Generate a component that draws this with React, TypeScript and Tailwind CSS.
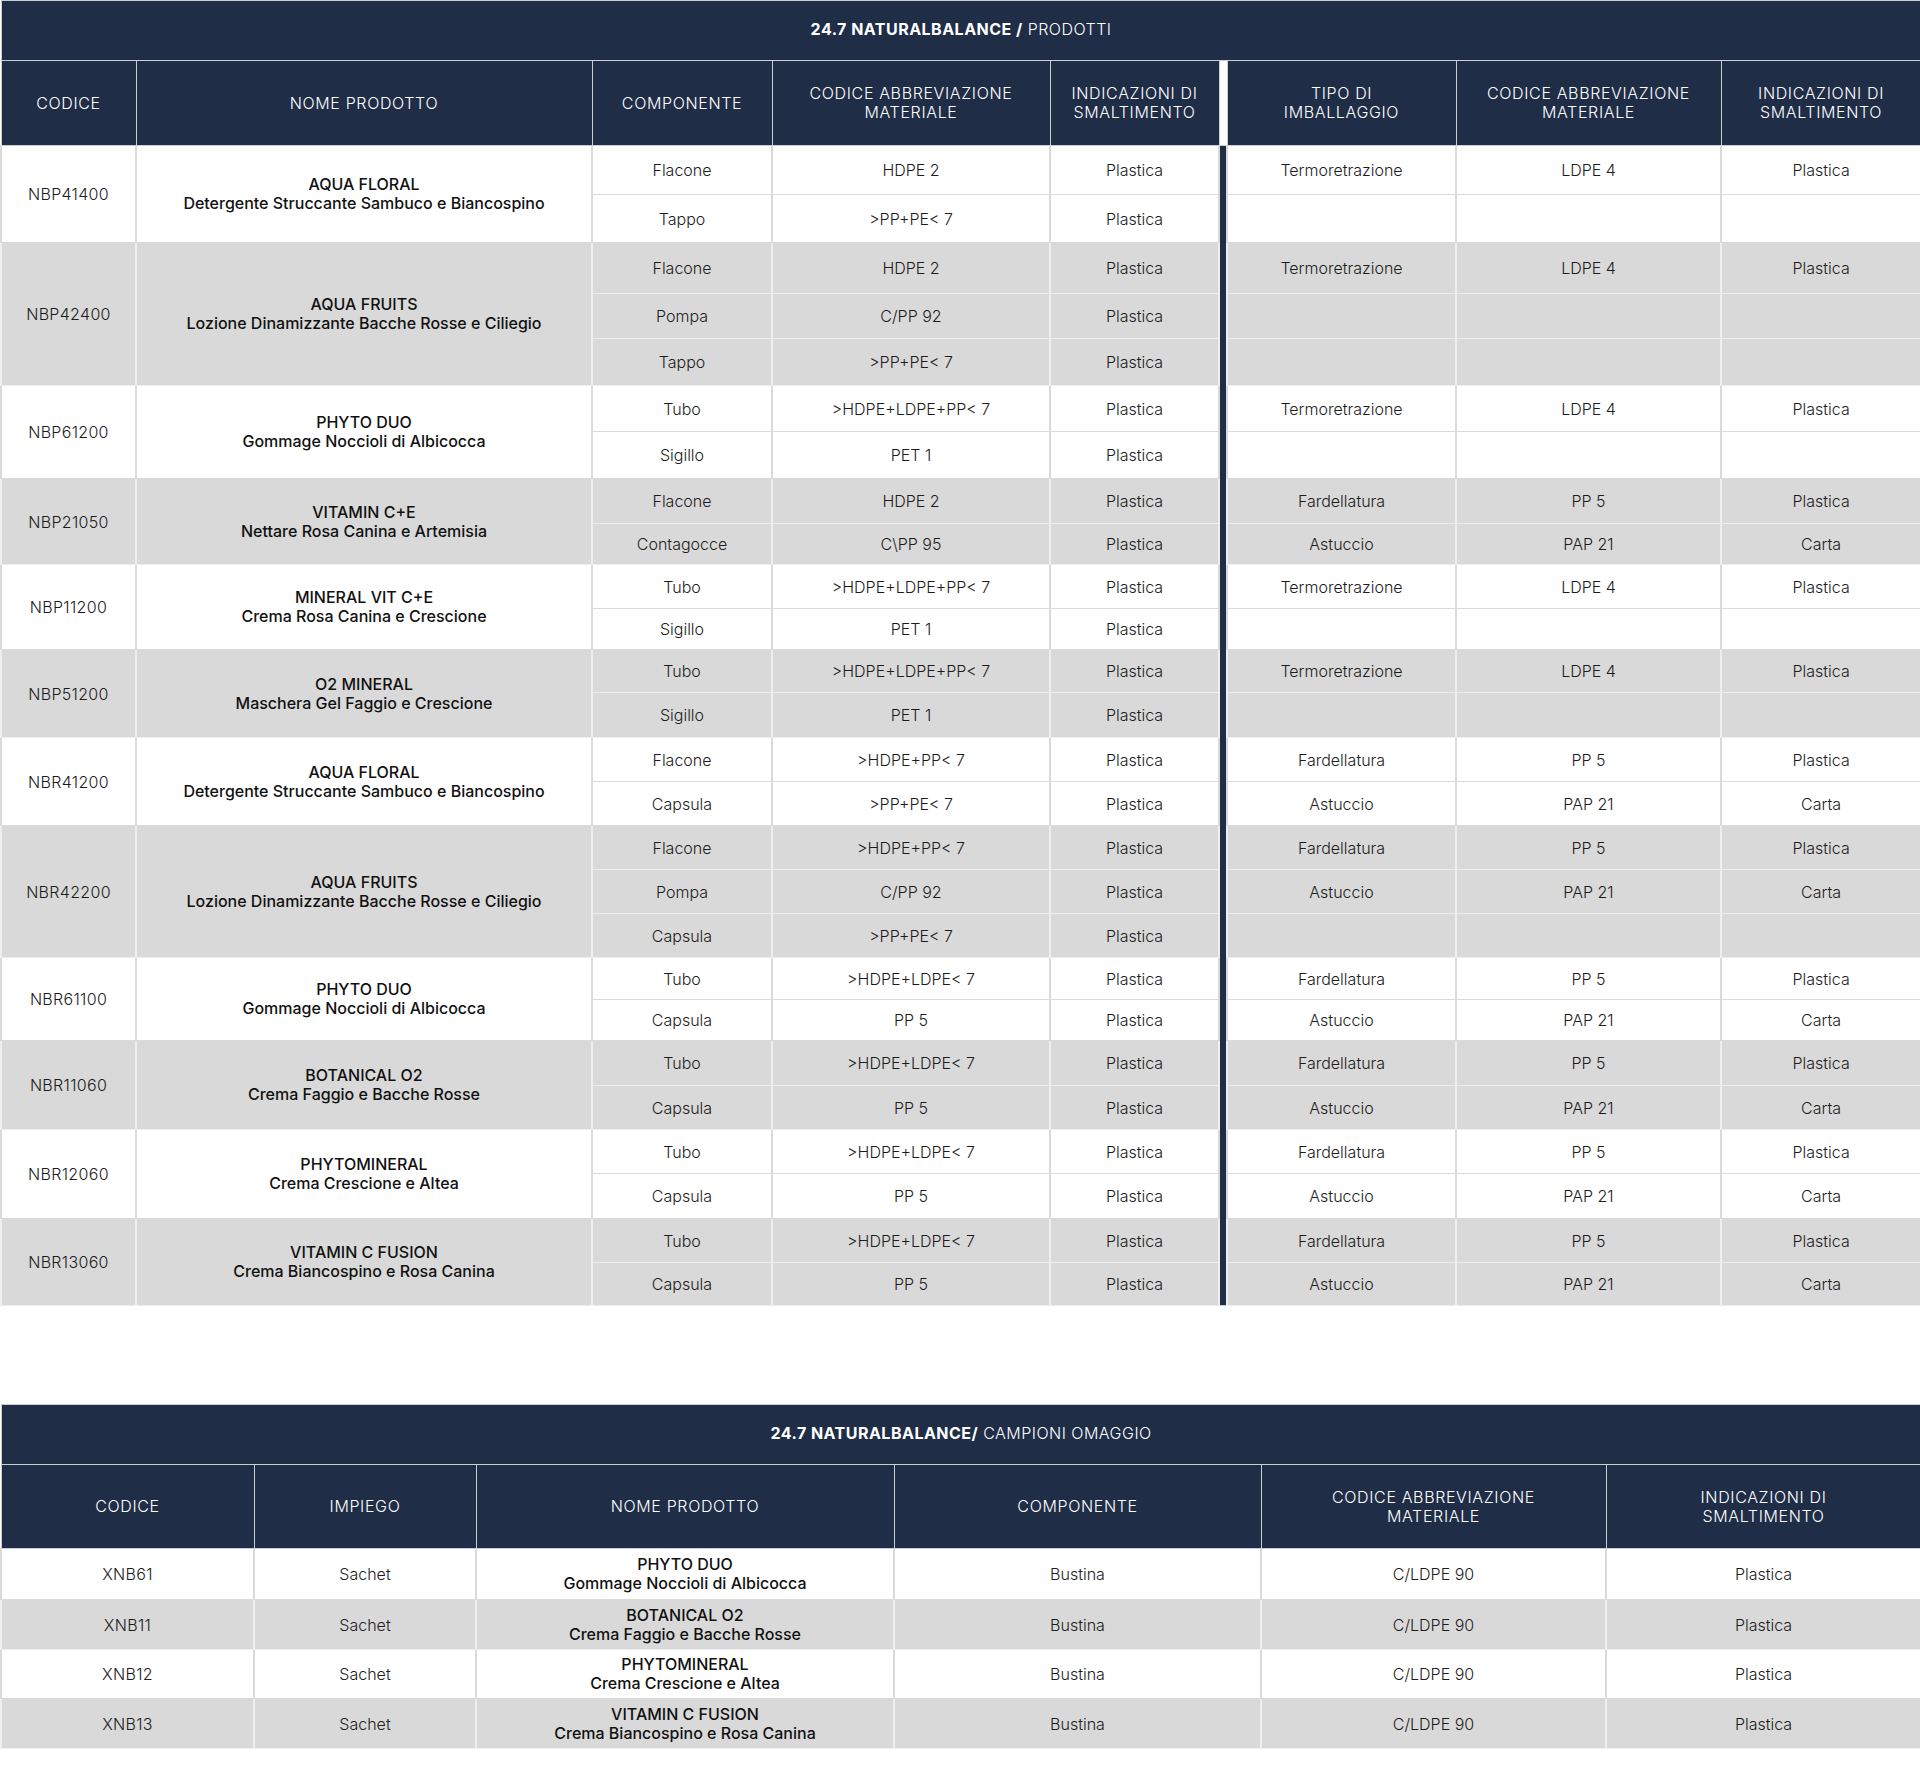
type Riga = {
  h: string;
  comp: string;
  mat: string;
  sm: string;
  tipo?: string;
  mat2?: string;
  sm2?: string;
};

type Prodotto = {
  codice: string;
  nome: string;
  desc: string;
  righe: Riga[];
};

const termo = { tipo: 'Termoretrazione', mat2: 'LDPE 4', sm2: 'Plastica' };
const farde = { tipo: 'Fardellatura', mat2: 'PP 5', sm2: 'Plastica' };
const astuc = { tipo: 'Astuccio', mat2: 'PAP 21', sm2: 'Carta' };

const prodotti: Prodotto[] = [
  {
    codice: 'NBP41400',
    nome: 'AQUA FLORAL',
    desc: 'Detergente Struccante Sambuco e Biancospino',
    righe: [
      { h: 'h-[49px]', comp: 'Flacone', mat: 'HDPE 2', sm: 'Plastica', ...termo },
      { h: 'h-[48px]', comp: 'Tappo', mat: '>PP+PE< 7', sm: 'Plastica' },
    ],
  },
  {
    codice: 'NBP42400',
    nome: 'AQUA FRUITS',
    desc: 'Lozione Dinamizzante Bacche Rosse e Ciliegio',
    righe: [
      { h: 'h-[51px]', comp: 'Flacone', mat: 'HDPE 2', sm: 'Plastica', ...termo },
      { h: 'h-[45px]', comp: 'Pompa', mat: 'C/PP 92', sm: 'Plastica' },
      { h: 'h-[47px]', comp: 'Tappo', mat: '>PP+PE< 7', sm: 'Plastica' },
    ],
  },
  {
    codice: 'NBP61200',
    nome: 'PHYTO DUO',
    desc: 'Gommage Noccioli di Albicocca',
    righe: [
      { h: 'h-[46px]', comp: 'Tubo', mat: '>HDPE+LDPE+PP< 7', sm: 'Plastica', ...termo },
      { h: 'h-[47px]', comp: 'Sigillo', mat: 'PET 1', sm: 'Plastica' },
    ],
  },
  {
    codice: 'NBP21050',
    nome: 'VITAMIN C+E',
    desc: 'Nettare Rosa Canina e Artemisia',
    righe: [
      { h: 'h-[45px]', comp: 'Flacone', mat: 'HDPE 2', sm: 'Plastica', ...farde },
      { h: 'h-[41px]', comp: 'Contagocce', mat: 'C\\PP 95', sm: 'Plastica', ...astuc },
    ],
  },
  {
    codice: 'NBP11200',
    nome: 'MINERAL VIT C+E',
    desc: 'Crema Rosa Canina e Crescione',
    righe: [
      { h: 'h-[44px]', comp: 'Tubo', mat: '>HDPE+LDPE+PP< 7', sm: 'Plastica', ...termo },
      { h: 'h-[41px]', comp: 'Sigillo', mat: 'PET 1', sm: 'Plastica' },
    ],
  },
  {
    codice: 'NBP51200',
    nome: 'O2 MINERAL',
    desc: 'Maschera Gel Faggio e Crescione',
    righe: [
      { h: 'h-[43px]', comp: 'Tubo', mat: '>HDPE+LDPE+PP< 7', sm: 'Plastica', ...termo },
      { h: 'h-[45px]', comp: 'Sigillo', mat: 'PET 1', sm: 'Plastica' },
    ],
  },
  {
    codice: 'NBR41200',
    nome: 'AQUA FLORAL',
    desc: 'Detergente Struccante Sambuco e Biancospino',
    righe: [
      { h: 'h-[44px]', comp: 'Flacone', mat: '>HDPE+PP< 7', sm: 'Plastica', ...farde },
      { h: 'h-[44px]', comp: 'Capsula', mat: '>PP+PE< 7', sm: 'Plastica', ...astuc },
    ],
  },
  {
    codice: 'NBR42200',
    nome: 'AQUA FRUITS',
    desc: 'Lozione Dinamizzante Bacche Rosse e Ciliegio',
    righe: [
      { h: 'h-[44px]', comp: 'Flacone', mat: '>HDPE+PP< 7', sm: 'Plastica', ...farde },
      { h: 'h-[44px]', comp: 'Pompa', mat: 'C/PP 92', sm: 'Plastica', ...astuc },
      { h: 'h-[44px]', comp: 'Capsula', mat: '>PP+PE< 7', sm: 'Plastica' },
    ],
  },
  {
    codice: 'NBR61100',
    nome: 'PHYTO DUO',
    desc: 'Gommage Noccioli di Albicocca',
    righe: [
      { h: 'h-[42px]', comp: 'Tubo', mat: '>HDPE+LDPE< 7', sm: 'Plastica', ...farde },
      { h: 'h-[41px]', comp: 'Capsula', mat: 'PP 5', sm: 'Plastica', ...astuc },
    ],
  },
  {
    codice: 'NBR11060',
    nome: 'BOTANICAL O2',
    desc: 'Crema Faggio e Bacche Rosse',
    righe: [
      { h: 'h-[45px]', comp: 'Tubo', mat: '>HDPE+LDPE< 7', sm: 'Plastica', ...farde },
      { h: 'h-[44px]', comp: 'Capsula', mat: 'PP 5', sm: 'Plastica', ...astuc },
    ],
  },
  {
    codice: 'NBR12060',
    nome: 'PHYTOMINERAL',
    desc: 'Crema Crescione e Altea',
    righe: [
      { h: 'h-[44px]', comp: 'Tubo', mat: '>HDPE+LDPE< 7', sm: 'Plastica', ...farde },
      { h: 'h-[45px]', comp: 'Capsula', mat: 'PP 5', sm: 'Plastica', ...astuc },
    ],
  },
  {
    codice: 'NBR13060',
    nome: 'VITAMIN C FUSION',
    desc: 'Crema Biancospino e Rosa Canina',
    righe: [
      { h: 'h-[44px]', comp: 'Tubo', mat: '>HDPE+LDPE< 7', sm: 'Plastica', ...farde },
      { h: 'h-[43px]', comp: 'Capsula', mat: 'PP 5', sm: 'Plastica', ...astuc },
    ],
  },
];

const campioni = [
  { codice: 'XNB61', nome: 'PHYTO DUO', desc: 'Gommage Noccioli di Albicocca', h: 'h-[51px]' },
  { codice: 'XNB11', nome: 'BOTANICAL O2', desc: 'Crema Faggio e Bacche Rosse', h: 'h-[50px]' },
  { codice: 'XNB12', nome: 'PHYTOMINERAL', desc: 'Crema Crescione e Altea', h: 'h-[49px]' },
  { codice: 'XNB13', nome: 'VITAMIN C FUSION', desc: 'Crema Biancospino e Rosa Canina', h: 'h-[50px]' },
];

const totaleRighe = prodotti.reduce((n, p) => n + p.righe.length, 0);

// celle dell'intestazione blu
const th = 'border border-[#c9ced6] bg-[#1f2d47] text-white font-light text-[16px] leading-[19px] tracking-[0.04em] uppercase text-center align-middle';
const thTitolo = 'border border-[#c9ced6] bg-[#1f2d47] text-white font-light text-[16px] tracking-[0.03em] text-center align-middle pb-1';

const tdBianca = 'border-x-2 border-y border-[#dadada] bg-white text-center align-middle p-0';
const tdGrigia = 'border-x-2 border-y border-[#eeeeee] bg-[#d9d9d9] text-center align-middle p-0';

function NomeProdotto({ nome, desc }: { nome: string; desc: string }) {
  return (
    <div className="font-medium text-[#111] leading-[19px]">
      <div>{nome}</div>
      <div>{desc}</div>
    </div>
  );
}

function TabellaProdotti() {
  return (
    <table className="w-[1920px] table-fixed border-collapse">
      <colgroup>
        <col className="w-[135px]" />
        <col className="w-[456px]" />
        <col className="w-[180px]" />
        <col className="w-[278px]" />
        <col className="w-[169px]" />
        <col className="w-[8px]" />
        <col className="w-[229px]" />
        <col className="w-[265px]" />
        <col className="w-[200px]" />
      </colgroup>
      <thead>
        <tr className="h-[60px]">
          <th colSpan={9} className={thTitolo}>
            <span className="font-bold">24.7 NATURALBALANCE /</span> PRODOTTI
          </th>
        </tr>
        <tr className="h-[85px]">
          <th className={th}>Codice</th>
          <th className={th}>Nome prodotto</th>
          <th className={th}>Componente</th>
          <th className={th}>
            Codice abbreviazione
            <br />
            materiale
          </th>
          <th className={th}>
            Indicazioni di
            <br />
            smaltimento
          </th>
          <th className="border border-[#c9ced6] bg-white" />
          <th className={th}>
            Tipo di
            <br />
            imballaggio
          </th>
          <th className={th}>
            Codice abbreviazione
            <br />
            materiale
          </th>
          <th className={th}>
            Indicazioni di
            <br />
            smaltimento
          </th>
        </tr>
      </thead>
      <tbody className="text-[16px] font-[350] text-[#1c1c1c]">
        {prodotti.map((p, gi) => {
          const td = gi % 2 === 1 ? tdGrigia : tdBianca;
          return p.righe.map((r, ri) => (
            <tr key={p.codice + ri} className={r.h}>
              {ri === 0 && (
                <>
                  <td rowSpan={p.righe.length} className={td + ' tracking-[0.02em]'}>
                    {p.codice}
                  </td>
                  <td rowSpan={p.righe.length} className={td}>
                    <NomeProdotto nome={p.nome} desc={p.desc} />
                  </td>
                </>
              )}
              <td className={td}>{r.comp}</td>
              <td className={td}>{r.mat}</td>
              <td className={td}>{r.sm}</td>
              {gi === 0 && ri === 0 && (
                <td rowSpan={totaleRighe} className="border border-[#c9ced6] bg-[#1f2d47] p-0" />
              )}
              <td className={td}>{r.tipo}</td>
              <td className={td}>{r.mat2}</td>
              <td className={td}>{r.sm2}</td>
            </tr>
          ));
        })}
      </tbody>
    </table>
  );
}

function TabellaCampioni() {
  return (
    <table className="w-[1920px] table-fixed border-collapse">
      <colgroup>
        <col className="w-[253px]" />
        <col className="w-[222px]" />
        <col className="w-[418px]" />
        <col className="w-[367px]" />
        <col className="w-[345px]" />
        <col className="w-[315px]" />
      </colgroup>
      <thead>
        <tr className="h-[60px]">
          <th colSpan={6} className={thTitolo}>
            <span className="font-bold">24.7 NATURALBALANCE/</span> CAMPIONI OMAGGIO
          </th>
        </tr>
        <tr className="h-[84px]">
          <th className={th}>Codice</th>
          <th className={th}>Impiego</th>
          <th className={th}>Nome prodotto</th>
          <th className={th}>Componente</th>
          <th className={th}>
            Codice abbreviazione
            <br />
            materiale
          </th>
          <th className={th}>
            Indicazioni di
            <br />
            smaltimento
          </th>
        </tr>
      </thead>
      <tbody className="text-[16px] font-[350] text-[#1c1c1c]">
        {campioni.map((c, i) => {
          const td = i % 2 === 1 ? tdGrigia : tdBianca;
          return (
            <tr key={c.codice} className={c.h}>
              <td className={td + ' tracking-[0.02em]'}>{c.codice}</td>
              <td className={td}>Sachet</td>
              <td className={td}>
                <NomeProdotto nome={c.nome} desc={c.desc} />
              </td>
              <td className={td}>Bustina</td>
              <td className={td}>C/LDPE 90</td>
              <td className={td}>Plastica</td>
            </tr>
          );
        })}
      </tbody>
    </table>
  );
}

export default function App() {
  return (
    <div className="w-[1920px] bg-white pb-[28px] font-['Inter',sans-serif]">
      <TabellaProdotti />
      <div className="mt-[98px]">
        <TabellaCampioni />
      </div>
    </div>
  );
}
